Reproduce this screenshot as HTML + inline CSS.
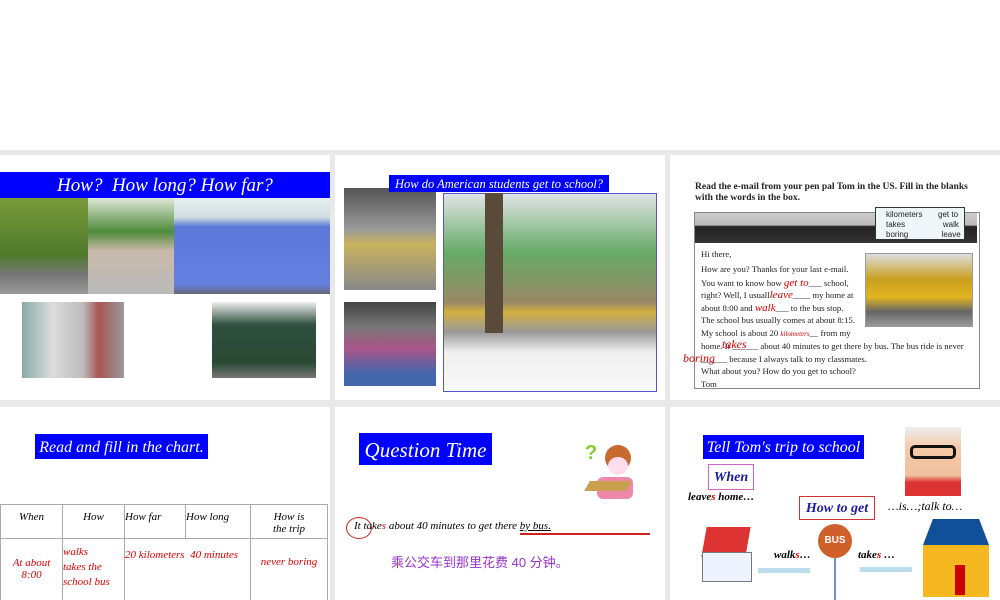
<!DOCTYPE html><html><head><meta charset="utf-8"><style>
body{margin:0;width:1000px;height:600px;background:#fff;position:relative;overflow:hidden;font-family:"Liberation Serif",serif}
.bg{position:absolute;left:0;top:150px;width:1000px;height:450px;background:#e9e9e9}
.p{position:absolute;background:#fff;overflow:hidden}
.a{position:absolute}
.t{position:absolute;background:#0000ff;color:#fff;font-style:italic;white-space:nowrap}
i{font-style:italic}
.r{color:#d00}
</style></head><body>
<div class="bg"></div>
<div class="p" style="left:0;top:155px;width:330px;height:245px">
 <div class="t" style="left:0;top:17px;width:330px;height:26px;font-size:19px;text-align:center;line-height:28px">How?&nbsp; How long? How far?</div>
 <div class="a" style="left:0;top:43px;width:88px;height:96px;background:linear-gradient(#7a9a3a,#4f7a2a 60%,#777 80%,#999)"></div>
 <div class="a" style="left:88px;top:43px;width:86px;height:96px;background:linear-gradient(#dfe8d8,#4f8a3a 35%,#c9b9a9 55%,#bbb)"></div>
 <div class="a" style="left:174px;top:43px;width:156px;height:96px;background:linear-gradient(#e8f0f0,#d0dde0 20%,#5a78d8 30%,#6680e0 90%,#667)"></div>
 <div class="a" style="left:22px;top:147px;width:102px;height:76px;background:linear-gradient(90deg,#8aa 0,#ddd 30%,#bbb 60%,#a55 75%,#999)"></div>
 <div class="a" style="left:212px;top:147px;width:104px;height:76px;background:linear-gradient(#eee,#2f4f3f 30%,#2a4a35 80%,#777)"></div>
</div>
<div class="p" style="left:335px;top:155px;width:330px;height:245px">
 <div class="a" style="left:9px;top:33px;width:92px;height:102px;background:linear-gradient(#555,#999 40%,#c9b360 55%,#888)"></div>
 <div class="a" style="left:9px;top:147px;width:92px;height:84px;background:linear-gradient(#444,#777 30%,#a58 55%,#46a 85%)"></div>
 <div class="a" style="left:108px;top:38px;width:212px;height:197px;border:1px solid #5555cc;background:linear-gradient(#e0e4e6,#6a6 30%,#986 55%,#d2b040 60%,#999 70%,#eee 80%,#fafafa)"></div>
 <div class="a" style="left:150px;top:38px;width:18px;height:140px;background:#5a4a3a"></div>
 <div class="t" style="left:54px;top:20px;width:220px;height:17px;font-size:12.5px;text-align:center;line-height:19px">How do American students get to school?</div>
</div>
<div class="p" style="left:670px;top:155px;width:330px;height:245px;font-size:9px;color:#222">
 <div class="a" style="left:25px;top:27px;font-weight:bold;font-size:9.5px;line-height:11px">Read the e-mail from your pen pal Tom in the US. Fill in the blanks<br>with the words in the box.</div>
 <div class="a" style="left:24px;top:57px;width:284px;height:175px;border:1px solid #888;background:#fff"></div>
 <div class="a" style="left:25px;top:58px;width:282px;height:30px;background:linear-gradient(#ccc,#bbb 40%,#222 45%,#333)"></div>
 <div class="a" style="left:205px;top:52px;width:90px;height:33px;background:#eef6fa;border:1px solid #333;font-family:'Liberation Sans',sans-serif;font-size:8px;line-height:10px;padding:2px 0 0 10px;box-sizing:border-box">kilometers&nbsp;&nbsp;&nbsp;&nbsp;&nbsp;&nbsp;&nbsp;get to<br>takes&nbsp;&nbsp;&nbsp;&nbsp;&nbsp;&nbsp;&nbsp;&nbsp;&nbsp;&nbsp;&nbsp;&nbsp;&nbsp;&nbsp;&nbsp;&nbsp;&nbsp;walk<br>boring&nbsp;&nbsp;&nbsp;&nbsp;&nbsp;&nbsp;&nbsp;&nbsp;&nbsp;&nbsp;&nbsp;&nbsp;&nbsp;&nbsp;&nbsp;leave</div>
 <div class="a" style="left:195px;top:98px;width:106px;height:72px;border:1px solid #999;background:linear-gradient(#ddd,#c9a020 35%,#e0b520 60%,#666 80%,#999)"></div>
 <div class="a" style="left:31px;top:93px;line-height:12.5px;font-size:8.7px;white-space:nowrap">Hi there,<br><span style="line-height:16px">How are you? Thanks for your last e-mail.</span><br>You want to know how <i class="r" style="font-size:11px">get to</i>___ school,<br>right? Well, I usuall<i class="r" style="font-size:11px">leave</i>____ my home at<br>about 8:00 and <i class="r" style="font-size:11px">walk</i>___ to the bus stop.<br>The school bus usually comes at about 8:15.<br>My school is about 20 <i class="r" style="font-size:7px">kilometers</i>__ from my<br>home. It ______ about 40 minutes to get there by bus. The bus ride is never<br>______ because I always talk to my classmates.<br>What about you? How do you get to school?<br>Tom</div>
 <i class="a r" style="left:52px;top:182px;font-size:12px">takes</i>
 <i class="a r" style="left:13px;top:196px;font-size:12px">boring</i>
</div>
<div class="p" style="left:0;top:407px;width:330px;height:193px">
 <div class="t" style="left:35px;top:27px;width:173px;height:25px;font-size:16px;text-align:center;line-height:27px">Read and fill in the chart.</div>
 <table class="a" style="left:0;top:97px;border-collapse:collapse;font-style:italic;font-size:11px;text-align:center;table-layout:fixed;width:327px" cellpadding="0">
  <colgroup><col style="width:62px"><col style="width:62px"><col style="width:61px"><col style="width:65px"><col style="width:77px"></colgroup>
  <tr style="height:34px;vertical-align:top"><td style="border:1px solid #aaa;padding-top:6px">When</td><td style="border:1px solid #aaa;padding-top:6px">How</td><td style="border:1px solid #aaa;padding-top:6px;text-align:left">How far</td><td style="border:1px solid #aaa;padding-top:6px;text-align:left">How long</td><td style="border:1px solid #aaa;padding-top:6px">How is<br>the trip</td></tr>
  <tr style="height:70px;vertical-align:top;color:#d00"><td style="border:1px solid #aaa;padding-top:18px">At about<br>8:00</td><td style="border:1px solid #aaa;text-align:left;padding-top:6px;line-height:15px">walks<br>takes the<br>school bus</td><td colspan="2" style="border:1px solid #aaa;text-align:left;padding-top:10px;white-space:nowrap">20 kilometers&nbsp; 40 minutes</td><td style="border:1px solid #aaa;padding-top:17px">never boring</td></tr>
 </table>
</div>
<div class="p" style="left:335px;top:407px;width:330px;height:193px">
 <div class="t" style="left:24px;top:26px;width:133px;height:32px;font-size:21px;text-align:center;line-height:34px">Question Time</div>
 <div class="a" style="left:250px;top:35px;font:bold 20px 'Liberation Sans';color:#8c3">?</div>
 <div class="a" style="left:270px;top:38px;width:26px;height:26px;border-radius:50%;background:#c86a30"></div>
 <div class="a" style="left:273px;top:50px;width:20px;height:18px;border-radius:50%;background:#fde"></div>
 <div class="a" style="left:262px;top:70px;width:36px;height:22px;background:#e8a;border-radius:6px"></div>
 <div class="a" style="left:252px;top:74px;width:42px;height:10px;background:#c9a050;transform:skew(-30deg)"></div>
 <div class="a" style="left:11px;top:110px;width:24px;height:20px;border:1.5px solid #c22;border-radius:50%"></div>
 <div class="a" style="left:19px;top:113px;font-style:italic;font-size:11px;white-space:nowrap">It take<span class="r">s</span> about 40 minutes to get there <u>by bus.</u></div>
 <div class="a" style="left:185px;top:126px;width:130px;height:1.5px;background:#c22"></div>
 <div class="a" style="left:56px;top:145px;font-family:'Liberation Sans','Noto Sans CJK SC',sans-serif;font-size:13px;color:#9933cc">乘公交车到那里花费 40 分钟。</div>
</div>
<div class="p" style="left:670px;top:407px;width:330px;height:193px">
 <div class="t" style="left:33px;top:28px;width:161px;height:24px;font-size:16px;text-align:center;line-height:26px">Tell Tom's trip to school</div>
 <div class="a" style="left:235px;top:20px;width:56px;height:69px;background:linear-gradient(#eee,#f4c9a8 30%,#f0c0a0 70%,#d33 80%)"></div>
 <div class="a" style="left:240px;top:38px;width:46px;height:14px;border:3px solid #111;border-radius:5px;box-sizing:border-box"></div>
 <div class="a" style="left:38px;top:57px;width:44px;height:24px;border:1px solid #c6c;color:#1a1aa0;font-style:italic;font-weight:bold;font-size:14px;text-align:center;line-height:25px">When</div>
 <div class="a" style="left:18px;top:84px;font-style:italic;font-weight:bold;font-size:11px">leave<span class="r">s</span> home…</div>
 <div class="a" style="left:129px;top:89px;width:74px;height:22px;border:1px solid #c33;color:#1a1aa0;font-style:italic;font-weight:bold;font-size:14px;text-align:center;line-height:23px">How to get</div>
 <div class="a" style="left:218px;top:92px;font-style:italic;font-size:12px">…is…;talk to…</div>
 <div class="a" style="left:34px;top:120px;width:44px;height:30px;background:#d33;transform:skew(-10deg)"></div>
 <div class="a" style="left:32px;top:145px;width:48px;height:28px;background:#eef4ff;border:1px solid #777"></div>
 <div class="a" style="left:148px;top:117px;width:34px;height:34px;border-radius:50%;background:#d0602a;color:#fff;font:bold 10px 'Liberation Sans';text-align:center;line-height:34px">BUS</div>
 <div class="a" style="left:164px;top:151px;width:2px;height:42px;background:#7090c0"></div>
 <div class="a" style="left:104px;top:142px;font-style:italic;font-weight:bold;font-size:11px">walk<span class="r">s</span>…</div>
 <div class="a" style="left:188px;top:142px;font-style:italic;font-weight:bold;font-size:11px">take<span class="r">s</span> …</div>
 <div class="a" style="left:88px;top:161px;width:52px;height:5px;background:#bde"></div>
 <div class="a" style="left:190px;top:160px;width:52px;height:5px;background:#bde"></div>
 <div class="a" style="left:253px;top:112px;width:66px;height:26px;background:#114f99;clip-path:polygon(15% 0,85% 0,100% 100%,0 100%)"></div>
 <div class="a" style="left:253px;top:138px;width:66px;height:52px;background:#f5b820"></div>
 <div class="a" style="left:285px;top:158px;width:10px;height:30px;background:#c00"></div>
</div>
</body></html>
